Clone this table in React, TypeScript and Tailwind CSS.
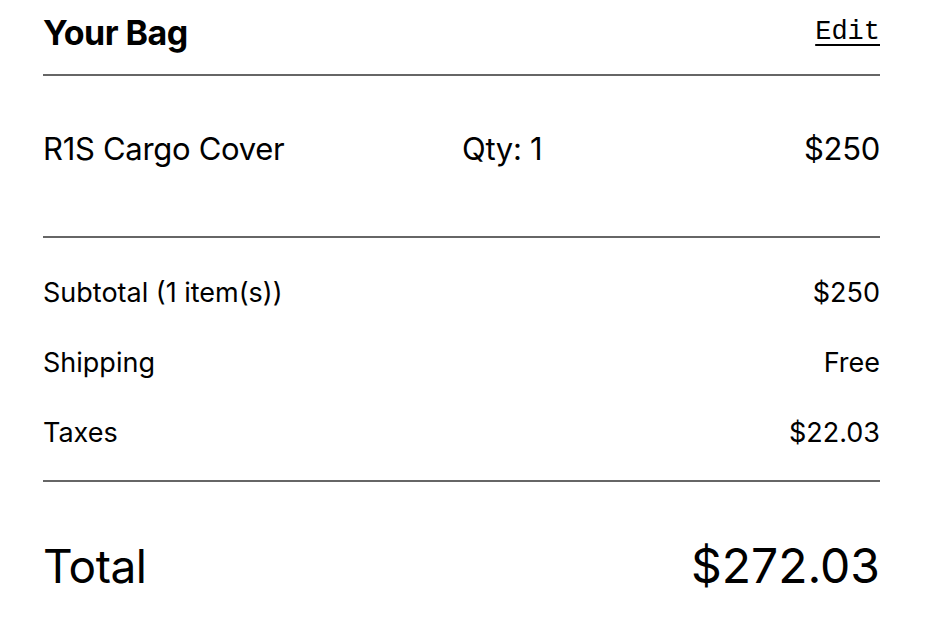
export default function App() {
  const rows = [
    { label: "Subtotal (1 item(s))", value: "$250" },
    { label: "Shipping", value: "Free" },
    { label: "Taxes", value: "$22.03" },
  ];

  return (
    <div className="min-h-screen bg-white text-black font-['Inter',sans-serif]">
      <div className="ml-[43px] w-[837px]">
        <div className="flex items-center justify-between h-[76px] border-b-2 border-[#666666] pb-[10px]">
          <h1 className="text-[34px] font-bold tracking-[-0.5px]">Your Bag</h1>
          <a href="#" className="text-[27px] leading-[32px] underline decoration-2 underline-offset-[5px] font-['Liberation_Mono',monospace]">
            Edit
          </a>
        </div>

        <div className="flex items-start h-[162px] border-b-2 border-[#666666] pt-[50px] text-[31px] tracking-[-0.3px]">
          <span className="w-[419px]">R1S Cargo Cover</span>
          <span className="flex-1">Qty: 1</span>
          <span>$250</span>
        </div>

        <div className="flex flex-col gap-[38px] h-[244px] border-b-2 border-[#666666] pt-[39px] text-[27px]">
          {rows.map((r) => (
            <div key={r.label} className="flex justify-between leading-[32px]">
              <span>{r.label}</span>
              <span>{r.value}</span>
            </div>
          ))}
        </div>

        <div className="flex justify-between items-center pt-[56px] leading-[56px]">
          <span className="text-[46px] tracking-[-0.5px]">Total</span>
          <span className="text-[48px]">$272.03</span>
        </div>
      </div>
    </div>
  );
}
